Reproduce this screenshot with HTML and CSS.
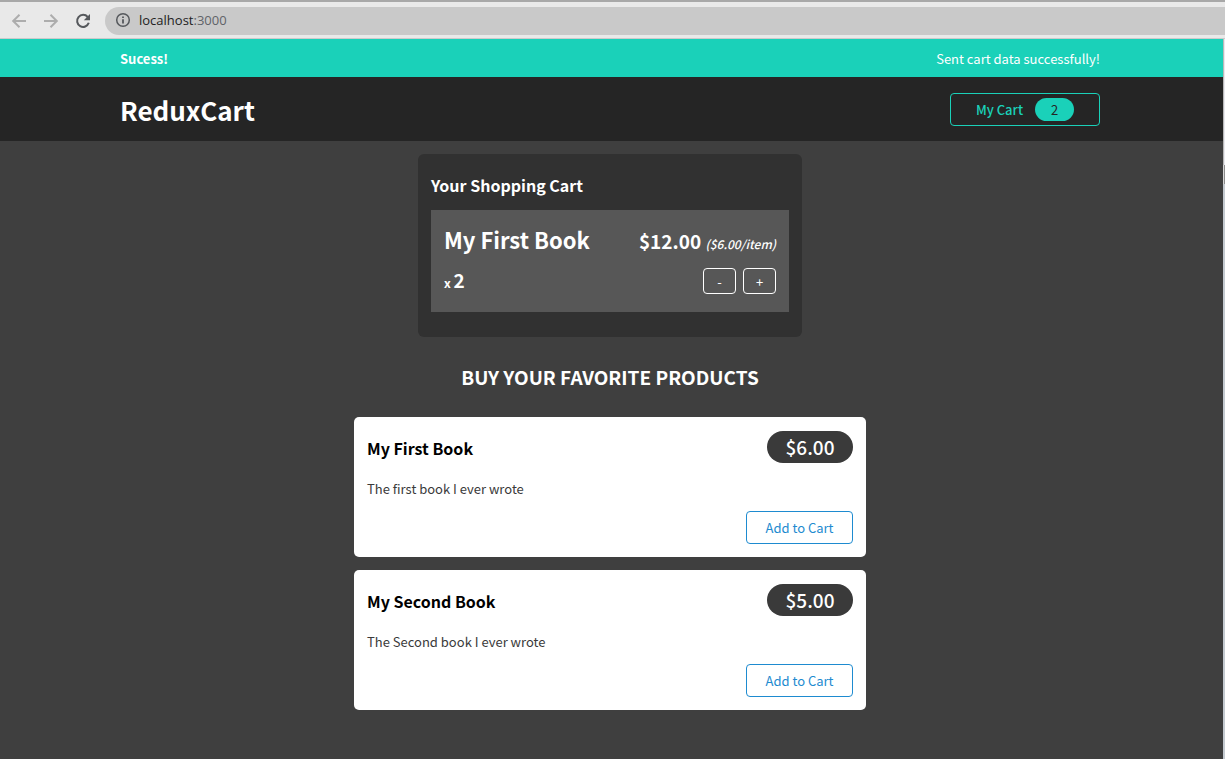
FILE: index.html
```html
<!DOCTYPE html>
<html lang="en">
<head>
<meta charset="utf-8">
<title>ReduxCart</title>
<link rel="stylesheet" href="styles.css">
</head>
<body>
<div class="toolbar">
  <button class="tool tool-off" aria-label="Back"><svg viewBox="0 0 16 16"><path d="M15 8H2.500M8.500 1.800L2.200 8l6.300 6.200"/></svg></button>
  <button class="tool tool-off" aria-label="Forward"><svg viewBox="0 0 16 16"><path d="M1 8h12.500M7.500 1.800L13.800 8l-6.300 6.200"/></svg></button>
  <button class="tool" aria-label="Reload"><svg viewBox="0 0 16 16"><path d="M12.700 4A6 6 0 1 0 13.800 9.800"/><path class="solid" d="M15 1v6.200H8.800z"/></svg></button>
  <div class="address">
    <svg class="info" viewBox="0 0 16 16"><circle cx="8" cy="8" r="6.300"/><path class="solid" d="M7.100 7.200h1.800v4.300H7.100zM7.100 4.400h1.800v1.700H7.100z"/></svg>
    <span class="url">localhost<span class="port">:3000</span></span>
  </div>
</div>
<div class="viewport">
  <div class="page">
    <section class="notification"><h2>Sucess!</h2><p>Sent cart data successfully!</p></section>
    <header class="header">
      <h1>ReduxCart</h1>
      <button class="cart-button"><span>My Cart</span><span class="badge">2</span></button>
    </header>
    <main class="main">
      <section class="cart">
        <h2>Your Shopping Cart</h2>
        <ul class="list">
          <li class="item">
            <div class="row">
              <h3>My First Book</h3>
              <div class="price">$12.00 <span class="item-price">($6.00/item)</span></div>
            </div>
            <div class="row details">
              <div class="quantity">x <span>2</span></div>
              <div class="actions"><button>-</button><button>+</button></div>
            </div>
          </li>
        </ul>
      </section>
      <section class="products">
        <h2>Buy your favorite products</h2>
        <ul class="list product-list">
          <li class="card">
            <div class="row card-head"><h3>My First Book</h3><div class="pill">$6.00</div></div>
            <p>The first book I ever wrote</p>
            <div class="card-actions"><button>Add to Cart</button></div>
          </li>
          <li class="card">
            <div class="row card-head"><h3>My Second Book</h3><div class="pill">$5.00</div></div>
            <p>The Second book I ever wrote</p>
            <div class="card-actions"><button>Add to Cart</button></div>
          </li>
        </ul>
      </section>
    </main>
  </div>
  <div class="edge"><div class="edge-top"></div><div class="edge-thumb"></div></div>
</div>
</body>
</html>
```
FILE: styles.css
```css
* { box-sizing: border-box; }
body {
  margin: 0;
  min-height: 100vh;
  display: flex;
  flex-direction: column;
  background: #3f3f3f;
  font: 13px/19px "Noto Sans CJK JP", sans-serif;
  color: #fff;
}
h1, h2, h3, p { margin: 0; }
button { font: inherit; background: transparent; border: 1px solid; border-radius: 4px; padding: 0; }

.toolbar {
  display: flex;
  align-items: center;
  height: 39px;
  padding: 3px 0 2px 11px;
  background: #e9e9e9;
  border-top: 2px solid #a8a8a8;
  border-bottom: 1px solid #cbcbcb;
}
.tool { display: flex; border: 0; margin-right: 16px; color: #55585c; }
.tool-off { color: #adadad; }
.tool svg, .info { width: 16px; height: 16px; fill: none; stroke: currentColor; stroke-width: 2; }
.tool .solid, .info .solid { fill: currentColor; stroke: none; }
.address {
  flex: 1;
  display: flex;
  align-items: center;
  gap: 8px;
  height: 28px;
  margin-left: -2px;
  padding: 0 0 1px 10px;
  border-radius: 14px 0 0 14px;
  background: #c9c9c9;
}
.info { color: #55585c; stroke-width: 1.500; }
.url { font: 13px/20px "Open Sans", sans-serif; color: #222; }
.port { color: #5f6368; }

.viewport { flex: 1; display: flex; }
.page { flex: 1; }
.notification, .header {
  display: flex;
  align-items: center;
  justify-content: space-between;
  padding: 0 123px 0 120px;
}
.notification { height: 38px; background: #1ad1b9; }
.notification h2, .notification p { font-size: 13px; }
.header { height: 64px; background: #252525; }
.header h1 { font-size: 26px; line-height: 38px; padding-top: 2px; }
.cart-button {
  display: flex;
  align-items: center;
  justify-content: center;
  gap: 12px;
  width: 150px;
  height: 33px;
  font-weight: 500;
  color: #1ad1b9;
}
.badge { width: 39px; line-height: 23px; border-radius: 12px; background: #1ad1b9; color: #252525; font-weight: 400; }

.main { padding: 13px 3px 48px 0; }
.list { list-style: none; margin: 0; padding: 0; }
.row { display: flex; align-items: center; justify-content: space-between; }
.cart {
  max-width: 384px;
  margin: 0 auto;
  padding: 19px 13px 25px;
  border-radius: 6px;
  background: #313131;
}
.cart h2 { font-size: 16px; line-height: 25px; margin-bottom: 12px; }
.item { padding: 13px 13px 18px; background: #575757; }
.item .row { align-items: baseline; }
.item h3 { font-size: 22px; line-height: 33px; }
.price { font-size: 19px; font-weight: 700; }
.item-price { font-size: 12px; font-weight: 500; font-style: italic; }
.item .details { align-items: center; margin-top: 12px; }
.quantity { font-size: 12px; font-weight: 700; }
.quantity span { font-size: 19px; }
.actions { display: flex; gap: 7px; }
.actions button { width: 33px; height: 26px; color: #fff; }

.products { max-width: 512px; margin: 0 auto; }
.products h2 {
  margin: 24px 0 25px;
  font-size: 19px;
  line-height: 31px;
  text-align: center;
  text-transform: uppercase;
}
.product-list { display: flex; flex-direction: column; gap: 13px; }
.card { padding: 14px 13px 13px; border-radius: 5px; background: #fff; color: #3a3a3a; }
.card h3 { font-size: 16px; line-height: 34px; color: #000; }
.pill { width: 86px; border-radius: 16px; background: #3a3a3a; color: #fff; font-size: 19px; font-weight: 500; line-height: 32px; text-align: center; }
.card-head { align-items: flex-start; }
.card p { margin: 14px 0 13px; }
.card-actions { display: flex; justify-content: flex-end; }
.card-actions button { width: 107px; height: 33px; color: #1e8bd0; }

.edge { display: flex; flex-direction: column; width: 2px; background: #c4cad0; }
.edge-top { height: 126px; background: #e9e9ee; border-left: 1px solid #b8b8b8; }
.edge-thumb { height: 19px; background: #8b8b8b; border-left: 1px solid #d8d8d8; }
```
